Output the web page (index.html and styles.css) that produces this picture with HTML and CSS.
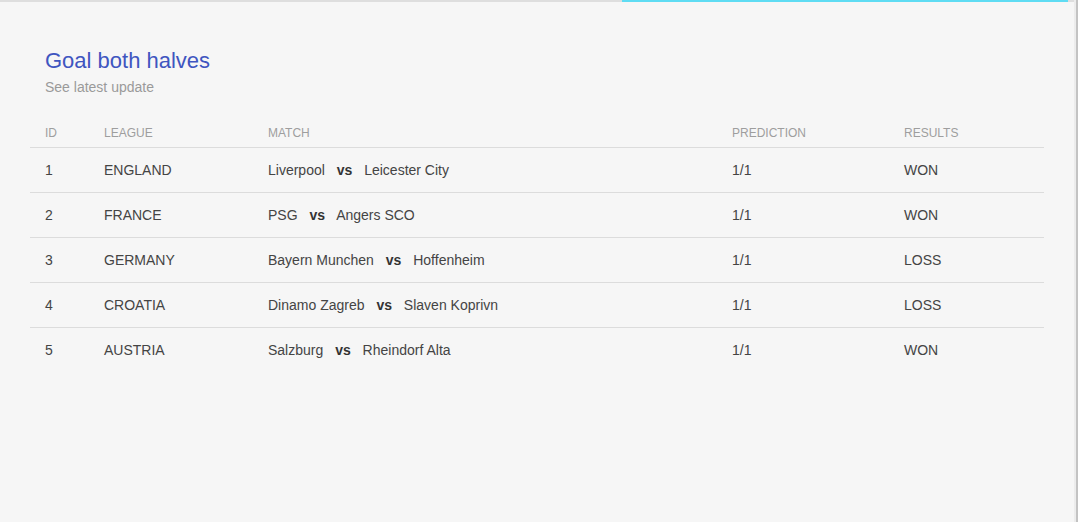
FILE: index.html
```html
<!DOCTYPE html>
<html>
<head>
<meta charset="utf-8">
<link rel="stylesheet" href="styles.css">
</head>
<body>
<div class="frame">
  <div class="page">
    <div class="topbar">
      <div class="progress-track"><div class="progress-fill" style="margin-left:622px;width:446px"></div></div>
    </div>
    <div class="content">
      <div class="heading">
        <h1 class="title">Goal both halves</h1>
        <p class="subtitle">See latest update</p>
      </div>
      <table class="results">
        <thead>
          <tr>
            <th class="c-id">ID</th>
            <th class="c-league">LEAGUE</th>
            <th class="c-match">MATCH</th>
            <th class="c-pred">PREDICTION</th>
            <th class="c-res">RESULTS</th>
          </tr>
        </thead>
        <tbody>
          <tr>
            <td>1</td><td>ENGLAND</td>
            <td>Liverpool <b class="vs">vs</b> Leicester City</td>
            <td>1/1</td><td>WON</td>
          </tr>
          <tr>
            <td>2</td><td>FRANCE</td>
            <td>PSG <b class="vs">vs</b> Angers SCO</td>
            <td>1/1</td><td>WON</td>
          </tr>
          <tr>
            <td>3</td><td>GERMANY</td>
            <td>Bayern Munchen <b class="vs">vs</b> Hoffenheim</td>
            <td>1/1</td><td>LOSS</td>
          </tr>
          <tr>
            <td>4</td><td>CROATIA</td>
            <td>Dinamo Zagreb <b class="vs">vs</b> Slaven Koprivn</td>
            <td>1/1</td><td>LOSS</td>
          </tr>
          <tr>
            <td>5</td><td>AUSTRIA</td>
            <td>Salzburg <b class="vs">vs</b> Rheindorf Alta</td>
            <td>1/1</td><td>WON</td>
          </tr>
        </tbody>
      </table>
    </div>
  </div>
</div>
</body>
</html>
```

FILE: styles.css
```css
html, body {
  margin: 0;
  padding: 0;
  height: 100%;
}
body {
  background: #f6f6f6;
  font-family: "Liberation Sans", Arial, sans-serif;
  color: #333;
}
.frame {
  height: 100%;
  box-sizing: border-box;
  border-right: 2px solid #c3c3c3;
}
.page {
  height: 100%;
  box-sizing: border-box;
  border-right: 2px solid #ececec;
}
.topbar {
  height: 2px;
  background: #dedede;
}
.progress-track {
  display: flex;
  height: 2px;
}
.progress-fill {
  height: 2px;
  background: #5fdcf3;
}
.content {
  padding: 46px 30px 0 30px;
}
.heading {
  padding: 0 15px;
}
.title {
  margin: 0;
  font-size: 22px;
  line-height: 26px;
  font-weight: normal;
  color: #3f55c0;
}
.subtitle {
  margin: 4px 0 0 0;
  font-size: 14px;
  line-height: 18px;
  color: #9a9a9a;
}
.results {
  margin-top: 21px;
  width: 1014px;
  border-collapse: collapse;
  table-layout: fixed;
}
.results th {
  text-align: left;
  font-weight: normal;
  font-size: 12px;
  line-height: 14px;
  color: #9e9e9e;
  padding: 9px 0 7px 15px;
  border-bottom: 1px solid #dcdcdc;
}
.results td {
  font-size: 14px;
  line-height: 16px;
  padding: 14px 0 14px 15px;
  color: #444;
}
.results tbody tr:not(:last-child) td {
  border-bottom: 1px solid #dcdcdc;
}
.c-id { width: 44px; }
.c-league { width: 149px; }
.c-match { width: 449px; }
.c-pred { width: 157px; }
.vs {
  margin: 0 8px;
  font-weight: bold;
  color: #333;
}
```
